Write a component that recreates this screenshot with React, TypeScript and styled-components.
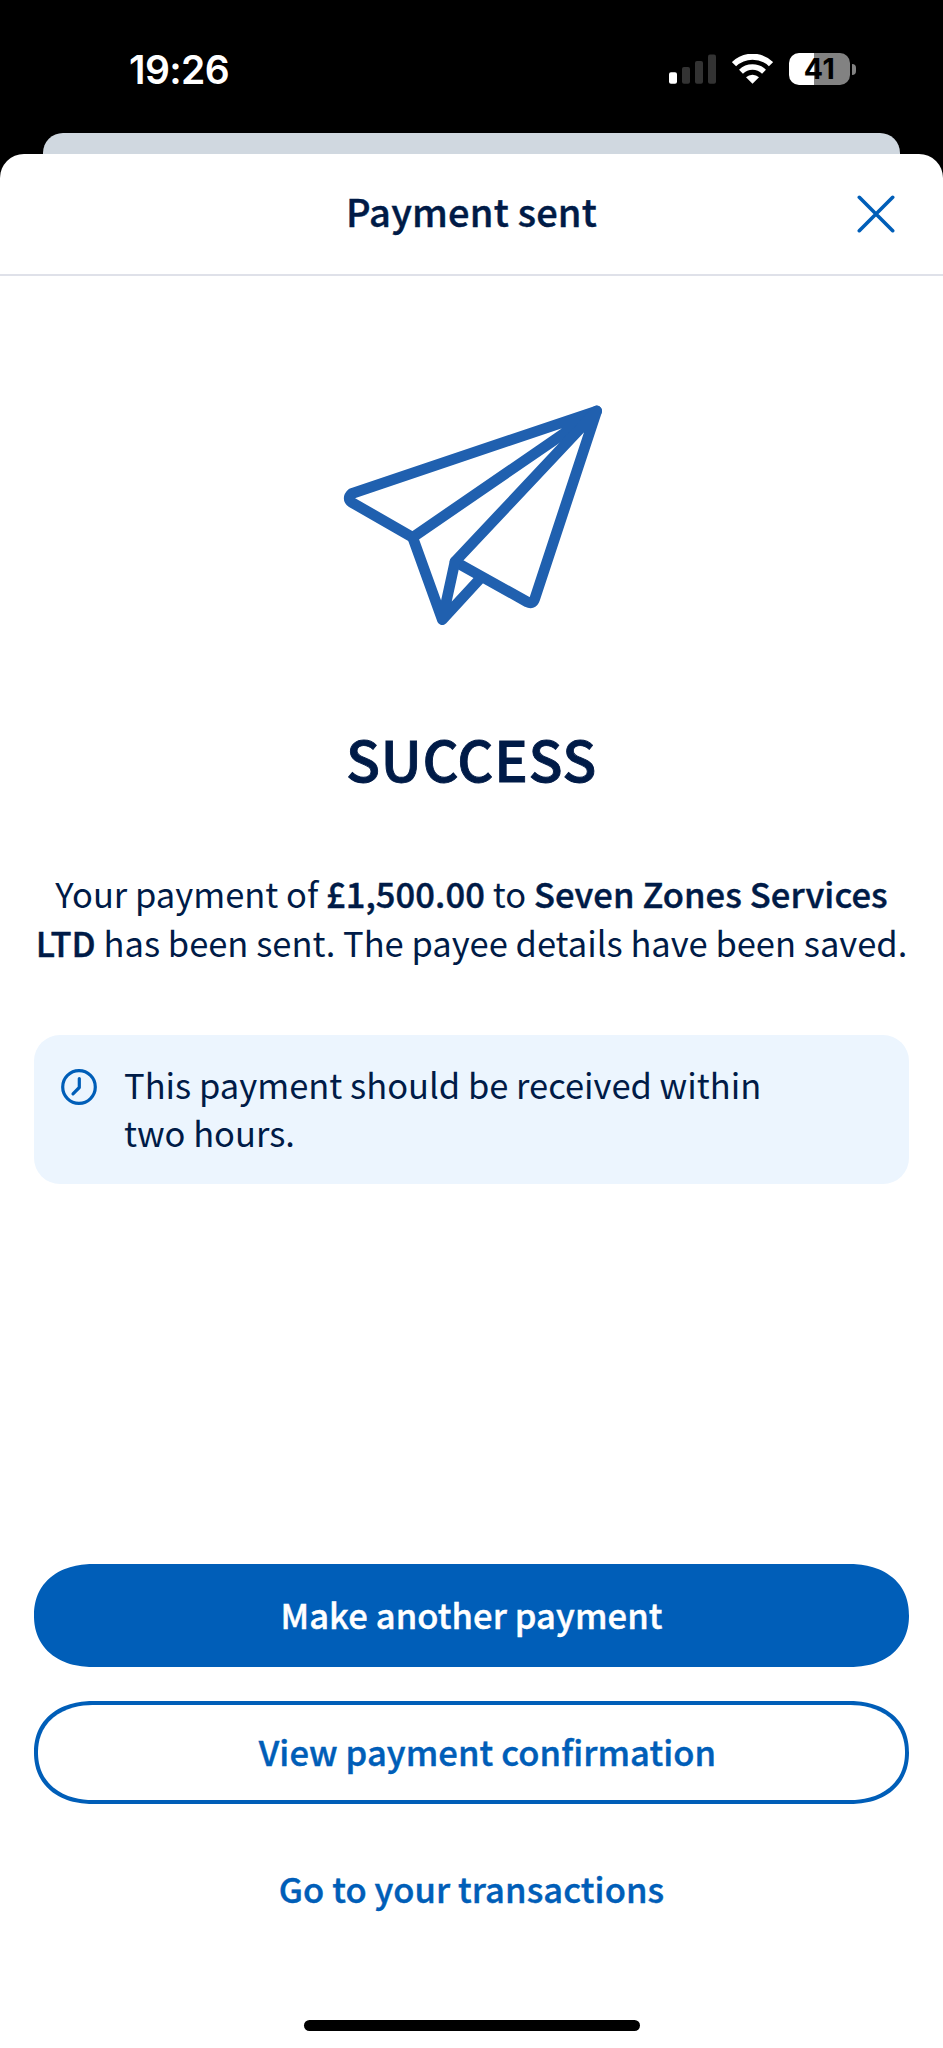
import React from "react";
import styled, { createGlobalStyle, css } from "styled-components";

const Global = createGlobalStyle`
  *, *::before, *::after { box-sizing: border-box; }
  html, body { margin: 0; padding: 0; background: #000; }
  body { font-family: "Noto Sans CJK SC", "Noto Sans", sans-serif; color: #001b47; }
  h1, h2, p { margin: 0; }
  button { font: inherit; margin: 0; padding: 0; background: none; border: 0; color: inherit; }
`;

/* Medium weight thickened slightly to read as semibold. */
const semibold = css`
  font-weight: 500;
  letter-spacing: 0.1px;
  -webkit-text-stroke: 0.45px currentColor;
`;

const Phone = styled.div`
  width: 943px;
  height: 2048px;
  display: flex;
  flex-direction: column;
  background: #000;
  overflow: hidden;
`;

const StatusBar = styled.header`
  height: 133px;
  flex: none;
  display: flex;
  align-items: flex-start;
  justify-content: space-between;
  padding: 45px 87px 0 129px;
`;

const Time = styled.span`
  margin-top: 1px;
  font: 600 39px/48px Inter, sans-serif;
  letter-spacing: -0.6px;
  color: #fff;
`;

const StatusIcons = styled.div`
  display: flex;
  align-items: center;
  height: 48px;
`;

const Signal = styled.svg`
  width: 47px;
  height: 30px;
  margin-right: 16px;
`;

const Wifi = styled.svg`
  width: 41px;
  height: 30px;
  margin-right: 16px;
`;

const Battery = styled.div`
  width: 61px;
  height: 32px;
  border-radius: 10px;
  background: linear-gradient(90deg, #fff 25px, #828282 25px);
  display: flex;
  align-items: center;
  justify-content: center;
  font: 650 28.5px/32px Inter, sans-serif;
  letter-spacing: 0.4px;
  color: #000;
`;

const BatteryCap = styled.span`
  width: 4px;
  height: 11px;
  margin-left: 2px;
  border-radius: 0 5px 5px 0;
  background: #828282;
`;

const CardBehind = styled.div`
  height: 50px;
  flex: none;
  margin: 0 43px -29px;
  border-radius: 20px 20px 0 0;
  background: #d0d8e0;
`;

const SheetWrap = styled.div`
  flex: 1;
  display: flex;
  position: relative;
`;

const Sheet = styled.main`
  flex: 1;
  display: flex;
  flex-direction: column;
  background: #fff;
  border-radius: 24px 24px 0 0;
`;

const TitleBar = styled.div`
  height: 122px;
  flex: none;
  display: grid;
  grid-template-columns: 1fr auto 1fr;
  align-items: center;
  border-bottom: 2px solid #dfe1e9;
`;

const Title = styled.h2`
  grid-column: 2;
  padding-bottom: 6px;
  font-size: 38px;
  line-height: 56px;
  ${semibold}
  letter-spacing: 0.2px;
`;

const CloseButton = styled.button`
  justify-self: end;
  width: 38px;
  height: 38px;
  margin-right: 48px;
  svg { display: block; width: 100%; height: 100%; }
`;

const Content = styled.section`
  flex: 1;
  display: flex;
  flex-direction: column;
  align-items: center;
  padding: 104px 34px 0;
`;

const Plane = styled.svg`
  width: 300px;
  height: 260px;
  flex: none;
  margin-left: -3px;
`;

const Heading = styled.h1`
  margin-top: 78px;
  font-size: 56px;
  line-height: 80px;
  ${semibold}
  letter-spacing: 0.7px;
  -webkit-text-stroke-width: 0.9px;
`;

const Message = styled.p`
  margin: 71px -10px 0;
  font-size: 34.5px;
  line-height: 48.5px;
  text-align: center;
  white-space: nowrap;
`;

const Strong = styled.strong`
  ${semibold}
`;

const Notice = styled.div`
  align-self: stretch;
  height: 149px;
  margin-top: 69px;
  padding: 25px 28px;
  display: flex;
  gap: 27px;
  border-radius: 26px;
  background: #ecf5fe;
`;

const ClockIcon = styled.svg`
  width: 36px;
  height: 36px;
  margin-top: 9px;
  margin-left: -1px;
  flex: none;
`;

const NoticeText = styled.p`
  font-size: 34.5px;
  line-height: 48px;
`;

const Actions = styled.footer`
  display: flex;
  flex-direction: column;
  gap: 34px;
  padding: 0 34px;
`;

const ActionButton = styled.button<{ $kind: "primary" | "outline" | "link" }>`
  height: 103px;
  padding-bottom: 3px;
  border-radius: 52px;
  font-size: 34.5px;
  line-height: 48px;
  color: #005eb8;
  ${semibold}
  @supports (corner-shape: superellipse(1.2)) {
    border-radius: 60px / 51.5px;
    corner-shape: superellipse(1.15);
  }
  ${({ $kind }) => $kind === "primary" && css`background: #005eb8; color: #fff;`}
  ${({ $kind }) => $kind === "outline" && css`border: 4px solid #005eb8; padding-left: 32px;`}
`;

const HomeIndicator = styled.div`
  align-self: center;
  flex: none;
  width: 336px;
  height: 11px;
  margin: 79px 0 17px;
  border-radius: 6px;
  background: #000;
`;

export default function App() {
  return (
    <>
      <Global />
      <Phone>
        <StatusBar>
          <Time>19:26</Time>
          <StatusIcons>
            <Signal viewBox="0 0 47 30">
              <rect x="0" y="18.3" width="8" height="11.5" rx="2" fill="#fff" />
              <rect x="13" y="13" width="8" height="16.8" rx="2" fill="#333" />
              <rect x="26" y="7" width="8" height="22.8" rx="2" fill="#333" />
              <rect x="39" y="0.5" width="8" height="29.3" rx="2" fill="#333" />
            </Signal>
            <Wifi viewBox="0 0 41 30" fill="none" stroke="#fff">
              <path d="M2 10.2A26.5 26.5 0 0 1 39 10.2" strokeWidth="6" />
              <path d="M9 17.7A16.5 16.5 0 0 1 32 17.7" strokeWidth="5.6" />
              <path d="M14 23.3A9.4 9.4 0 0 1 27 23.3L20.5 29.8Z" fill="#fff" stroke="none" />
            </Wifi>
            <Battery>41</Battery>
            <BatteryCap />
          </StatusIcons>
        </StatusBar>
        <CardBehind />
        <SheetWrap>
          <Sheet>
            <TitleBar>
              <Title>Payment sent</Title>
              <CloseButton aria-label="Close">
                <svg viewBox="0 0 38 38" stroke="#005eb8" strokeWidth="3.6" strokeLinecap="round">
                  <path d="M2.3 2.3L35.7 35.7M35.7 2.3L2.3 35.7" />
                </svg>
              </CloseButton>
            </TitleBar>
            <Content>
              <Plane viewBox="0 0 900 780" fill="none" stroke="#2060af" strokeWidth="32" strokeLinejoin="round" strokeLinecap="round">
                <path d="M830 93L95 341Q80 355 95 367L278 472Z" />
                <path d="M830 93L405 545L622 666Q638 674 644 657Z" />
                <path d="M278 472L367 719L405 545M367 719L482 594" />
              </Plane>
              <Heading>SUCCESS</Heading>
              <Message>
                Your payment of <Strong>£1,500.00</Strong> to <Strong>Seven Zones Services</Strong>
                <br />
                <Strong>LTD</Strong> has been sent. The payee details have been saved.
              </Message>
              <Notice>
                <ClockIcon viewBox="0 0 36 36" fill="none" stroke="#005eb8" strokeWidth="3.2">
                  <circle cx="18" cy="18" r="16.3" />
                  <path d="M18.3 9.5V18.5L12 24.8" strokeLinecap="round" strokeLinejoin="round" />
                </ClockIcon>
                <NoticeText>
                  This payment should be received within
                  <br />
                  two hours.
                </NoticeText>
              </Notice>
            </Content>
            <Actions>
              <ActionButton $kind="primary">Make another payment</ActionButton>
              <ActionButton $kind="outline">View payment confirmation</ActionButton>
              <ActionButton $kind="link">Go to your transactions</ActionButton>
            </Actions>
            <HomeIndicator />
          </Sheet>
        </SheetWrap>
      </Phone>
    </>
  );
}
